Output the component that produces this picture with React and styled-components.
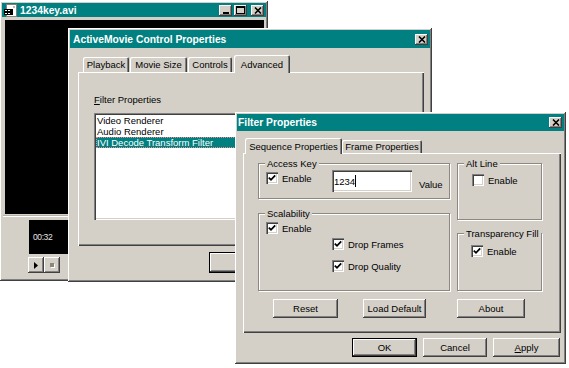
import styled, { createGlobalStyle, css } from 'styled-components';

const FACE = '#d4d0c8';
const TEAL = '#008080';

const GlobalStyle = createGlobalStyle`
  html, body {
    margin: 0;
    background: #fff;
  }
  body {
    font-family: "Liberation Sans", Arial, sans-serif;
    font-size: 9.5px;
    line-height: 11px;
    color: #000;
  }
`;

const raised = css`
  box-shadow: inset -1px -1px #404040, inset 1px 1px #fff, inset -2px -2px #808080;
`;

const sunken = css`
  box-shadow: inset 1px 1px #808080, inset 2px 2px #404040, inset -1px -1px #fff,
    inset -2px -2px ${FACE};
`;

const Desktop = styled.div`
  position: relative;
  width: 569px;
  height: 368px;
  overflow: hidden;
  background: #fff;
`;

// windows sit on a free desktop, so their spot is the content
const Window = styled.div`
  position: absolute;
  left: ${(p) => p.$x}px;
  top: ${(p) => p.$y}px;
  width: ${(p) => p.$w}px;
  height: ${(p) => p.$h}px;
  box-sizing: border-box;
  padding: 2px;
  background: ${FACE};
  ${raised}
  display: flex;
  flex-direction: column;
`;

const TitleBar = styled.div`
  flex: none;
  height: ${(p) => p.$h}px;
  display: flex;
  align-items: center;
  gap: 2px;
  padding: 0 2px 0 ${(p) => p.$pl ?? 3}px;
  background: ${TEAL};
  color: #fff;
  font-weight: bold;
  font-size: 10.3px;
`;

const TitleText = styled.span`
  flex: 1;
  white-space: nowrap;
`;

const TitleButton = styled.span`
  width: 13px;
  height: 11px;
  margin-left: ${(p) => p.$gap ?? 0}px;
  background: ${FACE};
  ${raised}
  display: flex;
  align-items: center;
  justify-content: center;
`;

const Video = styled.div`
  flex: none;
  height: 194px;
  margin: 3px 2px 0 3px;
  background: #000;
`;

const Divider = styled.div`
  margin: 1px 1px 0;
  border-top: 1px solid #b8b2a6;
  border-bottom: 1px solid #fff;
`;

const PlayerControls = styled.div`
  display: flex;
  flex-direction: column;
  align-items: flex-start;
  padding: 3px 0 0 27px;
`;

const TimeBox = styled.div`
  width: 120px;
  height: 34px;
  background: #000;
  color: #e4e4e4;
  font-size: 8.5px;
  letter-spacing: -0.4px;
  padding-left: 4px;
  box-sizing: border-box;
  display: flex;
  align-items: center;
`;

const Transport = styled.div`
  display: flex;
  margin: 3px 0 0 -1px;
`;

const TransportButton = styled.span`
  width: 16px;
  height: 16px;
  background: ${FACE};
  ${raised}
  display: flex;
  align-items: center;
  justify-content: center;
`;

const TabRow = styled.div`
  flex: none;
  position: relative;
  z-index: 1;
  display: flex;
  align-items: flex-end;
  gap: ${(p) => p.$gap ?? 1}px;
  height: ${(p) => p.$h}px;
  margin-top: 6px;
  padding-left: ${(p) => p.$pl}px;
`;

const Tab = styled.div`
  width: ${(p) => p.$w}px;
  height: ${(p) => (p.$active ? p.$h + 1 : p.$h - 2)}px;
  margin-bottom: ${(p) => (p.$active ? -1 : 0)}px;
  margin-left: ${(p) => p.$ml ?? 0}px;
  background: ${FACE};
  border-radius: 2px 2px 0 0;
  box-shadow: inset 1px 1px #fff, inset -1px 0 #404040, inset -2px 0 #808080;
  display: flex;
  align-items: center;
  justify-content: center;
  white-space: nowrap;
`;

const Panel = styled.div`
  flex: none;
  box-sizing: border-box;
  height: ${(p) => p.$h}px;
  margin: 0 ${(p) => p.$mr}px 0 ${(p) => p.$ml}px;
  padding: ${(p) => p.$pt}px 0 0 ${(p) => p.$pl}px;
  background: ${FACE};
  box-shadow: inset 1px 1px #fff, inset -1px -1px #404040, inset -2px -2px #808080;
  display: flex;
  flex-direction: column;
  overflow: hidden;
`;

const FieldLabel = styled.div`
  height: 11px;
`;

const ListBox = styled.div`
  width: 200px;
  height: 107px;
  margin-top: 8px;
  box-sizing: border-box;
  padding: 2px;
  background: #fff;
  ${sunken}
`;

const ListItem = styled.div`
  height: 11px;
  padding-left: 1px;
  white-space: nowrap;
  ${(p) =>
    p.$selected &&
    css`
      background: ${TEAL};
      color: #fff;
      outline: 1px dotted #f08a8a;
      outline-offset: -1px;
    `}
`;

const DialogButtons = styled.div`
  flex: none;
  display: flex;
  justify-content: flex-end;
  gap: ${(p) => p.$gap}px;
  margin-top: ${(p) => p.$mt}px;
  padding-right: ${(p) => p.$pr}px;
`;

const Button = styled.button`
  width: ${(p) => p.$w}px;
  height: ${(p) => p.$h ?? 19}px;
  margin-left: ${(p) => p.$ml ?? 0}px;
  padding: 0;
  border: none;
  font: inherit;
  color: #000;
  background: ${FACE};
  ${raised}
  ${(p) =>
    p.$default &&
    css`
      box-shadow: inset 0 0 0 1px #000, inset -2px -2px #404040, inset 2px 2px #fff,
        inset -3px -3px #808080;
    `}
`;

const Key = styled.span`
  text-decoration: underline;
`;

const GroupsRow = styled.div`
  display: flex;
  gap: 7px;
`;

const Column = styled.div`
  display: flex;
  flex-direction: column;
  gap: ${(p) => p.$gap}px;
`;

const Group = styled.div`
  position: relative;
  box-sizing: border-box;
  width: ${(p) => p.$w}px;
  height: ${(p) => p.$h}px;
  padding: ${(p) => p.$pt ?? 6}px 0 0 ${(p) => p.$pl ?? 7}px;
  border: 1px solid #8c887f;
  box-shadow: inset 1px 1px #fff, 1px 1px #fff;
  display: flex;
  flex-direction: column;
  align-items: flex-start;
`;

const Legend = styled.span`
  position: absolute;
  top: -6px;
  left: 6px;
  padding: 0 2px;
  background: ${FACE};
  line-height: 11px;
  white-space: nowrap;
`;

const AccessRow = styled.div`
  display: flex;
  align-items: flex-start;
`;

const CheckItem = styled.label`
  display: flex;
  align-items: center;
  gap: 4px;
  height: 12px;
  width: ${(p) => (p.$w ? `${p.$w}px` : 'fit-content')};
  margin: ${(p) => p.$mt ?? 0}px 0 0 ${(p) => p.$ml ?? 0}px;
  white-space: nowrap;
`;

const CheckBox = styled.span`
  flex: none;
  width: 12px;
  height: 12px;
  box-sizing: border-box;
  background: #fff;
  ${sunken}
  display: flex;
  align-items: center;
  justify-content: center;
`;

const TextBox = styled.div`
  width: 80px;
  height: 22px;
  box-sizing: border-box;
  padding-left: 2px;
  background: #fff;
  ${sunken}
  display: flex;
  align-items: center;
`;

const Caret = styled.span`
  width: 1px;
  height: 12px;
  background: #000;
`;

const SideLabel = styled.span`
  margin: 9px 0 0 7px;
`;

const ButtonRow = styled.div`
  display: flex;
  gap: 25px;
  margin-top: 8px;
  padding-left: 15px;
`;

const CheckMark = () => (
  <svg width="8" height="8" viewBox="0 0 8 8">
    <polyline points="0.8,3.6 3,5.8 7.2,1.4" fill="none" stroke="#000" strokeWidth="1.8" />
  </svg>
);

const Check = ({ checked, children, ...rest }) => (
  <CheckItem {...rest}>
    <CheckBox>{checked && <CheckMark />}</CheckBox>
    <span>{children}</span>
  </CheckItem>
);

const CloseGlyph = () => (
  <svg width="8" height="7" viewBox="0 0 8 7">
    <path d="M1 0.5 L7 6.5 M7 0.5 L1 6.5" stroke="#000" strokeWidth="1.6" />
  </svg>
);

const MinGlyph = () => (
  <svg width="8" height="8" viewBox="0 0 8 8">
    <rect x="1" y="6" width="6" height="2" fill="#000" />
  </svg>
);

const MaxGlyph = () => (
  <svg width="9" height="8" viewBox="0 0 9 8">
    <rect x="0.5" y="0.5" width="8" height="7" fill="none" stroke="#000" />
    <rect x="0" y="0" width="9" height="2" fill="#000" />
  </svg>
);

const MovieIcon = () => (
  <svg width="14" height="13" viewBox="0 0 14 13">
    <rect x="2.5" y="0.5" width="10" height="12" fill="#fff" stroke="#808080" />
    <rect x="0" y="5" width="9" height="6" fill="#000" />
    <rect x="1" y="6" width="2" height="1" fill="#fff" />
    <rect x="4" y="6" width="2" height="1" fill="#fff" />
    <rect x="1" y="9" width="2" height="1" fill="#fff" />
    <rect x="4" y="9" width="2" height="1" fill="#fff" />
    <rect x="9" y="2" width="2" height="2" fill="#c0c0c0" />
  </svg>
);

export default function App() {
  return (
    <Desktop>
      <GlobalStyle />

      <Window $x={0} $y={1} $w={268} $h={280}>
        <TitleBar $h={14} $pl={2}>
          <MovieIcon />
          <TitleText>1234key.avi</TitleText>
          <TitleButton>
            <MinGlyph />
          </TitleButton>
          <TitleButton>
            <MaxGlyph />
          </TitleButton>
          <TitleButton $gap={2}>
            <CloseGlyph />
          </TitleButton>
        </TitleBar>
        <Video />
        <Divider />
        <PlayerControls>
          <TimeBox>00:32</TimeBox>
          <Transport>
            <TransportButton>
              <svg width="4" height="7" viewBox="0 0 4 7">
                <polygon points="0,0 4,3.5 0,7" fill="#000" />
              </svg>
            </TransportButton>
            <TransportButton>
              <svg width="5" height="5" viewBox="0 0 5 5">
                <rect x="1" y="1" width="4" height="4" fill="#fff" />
                <rect x="0" y="0" width="4" height="4" fill="#8a867e" />
              </svg>
            </TransportButton>
          </Transport>
        </PlayerControls>
      </Window>

      <Window $x={68} $y={28} $w={364} $h={254}>
        <TitleBar $h={18}>
          <TitleText>ActiveMovie Control Properties</TitleText>
          <TitleButton>
            <CloseGlyph />
          </TitleButton>
        </TitleBar>
        <TabRow $h={18} $pl={13}>
          <Tab $h={17} $w={46}>Playback</Tab>
          <Tab $h={17} $w={57}>Movie Size</Tab>
          <Tab $h={17} $w={44}>Controls</Tab>
          <Tab $h={17} $w={56} $ml={1} $active>
            Advanced
          </Tab>
        </TabRow>
        <Panel $h={174} $ml={8} $mr={6} $pt={22} $pl={16}>
          <FieldLabel>
            <Key>F</Key>ilter Properties
          </FieldLabel>
          <ListBox>
            <ListItem>Video Renderer</ListItem>
            <ListItem>Audio Renderer</ListItem>
            <ListItem $selected>IVI Decode Transform Filter</ListItem>
          </ListBox>
        </Panel>
        <DialogButtons $gap={5} $mt={6} $pr={13}>
          <Button $w={66} $h={21} $default>
            OK
          </Button>
          <Button $w={66} $h={21}>
            Cancel
          </Button>
          <Button $w={66} $h={21}>
            Apply
          </Button>
        </DialogButtons>
      </Window>

      <Window $x={235} $y={112} $w={331} $h={252}>
        <TitleBar $h={17} $pl={1}>
          <TitleText>Filter Properties</TitleText>
          <TitleButton>
            <CloseGlyph />
          </TitleButton>
        </TitleBar>
        <TabRow $h={16} $pl={8} $gap={0}>
          <Tab $h={15} $w={97} $active>
            Sequence Properties
          </Tab>
          <Tab $h={15} $w={80}>
            Frame Properties
          </Tab>
        </TabRow>
        <Panel $h={180} $ml={6} $mr={3} $pt={10} $pl={15}>
          <GroupsRow>
            <Column $gap={14}>
              <Group $w={192} $h={36}>
                <Legend>Access Key</Legend>
                <AccessRow>
                  <Check $w={66} $mt={2} checked>
                    Enable
                  </Check>
                  <TextBox>
                    1234
                    <Caret />
                  </TextBox>
                  <SideLabel>Value</SideLabel>
                </AccessRow>
              </Group>
              <Group $w={192} $h={78} $pt={8}>
                <Legend>Scalability</Legend>
                <Check checked>Enable</Check>
                <Check $ml={66} $mt={4} checked>
                  Drop Frames
                </Check>
                <Check $ml={66} $mt={10} checked>
                  Drop Quality
                </Check>
              </Group>
            </Column>
            <Column $gap={13}>
              <Group $w={85} $h={57} $pt={10} $pl={14}>
                <Legend>Alt Line</Legend>
                <Check>Enable</Check>
              </Group>
              <Group $w={85} $h={58} $pt={11} $pl={13}>
                <Legend>Transparency Fill</Legend>
                <Check checked>Enable</Check>
              </Group>
            </Column>
          </GroupsRow>
          <ButtonRow>
            <Button $w={65}>Reset</Button>
            <Button $w={63}>Load Default</Button>
            <Button $w={68} $ml={6}>
              About
            </Button>
          </ButtonRow>
        </Panel>
        <DialogButtons $gap={6} $mt={5} $pr={4}>
          <Button $w={65} $default>
            OK
          </Button>
          <Button $w={64}>Cancel</Button>
          <Button $w={67}>
            <Key>A</Key>pply
          </Button>
        </DialogButtons>
      </Window>
    </Desktop>
  );
}
